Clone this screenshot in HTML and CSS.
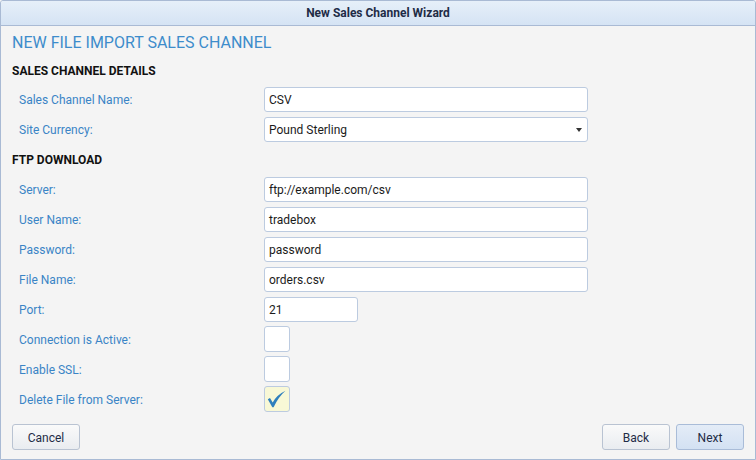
FILE: index.html
```html
<!DOCTYPE html>
<html>
<head>
<meta charset="utf-8">
<link rel="stylesheet" href="styles.css">
</head>
<body>
<div class="window">
  <div class="titlebar">New Sales Channel Wizard</div>
  <div class="content">
    <h1 class="heading">NEW FILE IMPORT SALES CHANNEL</h1>
    <div class="section first">SALES CHANNEL DETAILS</div>
    <div class="row"><span class="label">Sales Channel Name:</span><div class="input wide">CSV</div></div>
    <div class="row"><span class="label">Site Currency:</span><div class="input wide select">Pound Sterling<span class="caret"></span></div></div>
    <div class="section">FTP DOWNLOAD</div>
    <div class="row"><span class="label">Server:</span><div class="input wide">ftp://example.com/csv</div></div>
    <div class="row"><span class="label">User Name:</span><div class="input wide">tradebox</div></div>
    <div class="row"><span class="label">Password:</span><div class="input wide">password</div></div>
    <div class="row"><span class="label">File Name:</span><div class="input wide">orders.csv</div></div>
    <div class="row"><span class="label">Port:</span><div class="input short">21</div></div>
    <div class="row"><span class="label">Connection is Active:</span><div class="check"></div></div>
    <div class="row"><span class="label">Enable SSL:</span><div class="check"></div></div>
    <div class="row"><span class="label">Delete File from Server:</span><div class="check checked"><svg width="24" height="24" viewBox="0 0 24 24"><path d="M2.8 12.2 L5 11 L7.7 15.4 Q12 7.8 20.5 3.8 Q13.5 9.8 8.6 20.3 L7.3 20.3 Z" fill="#2f7fbd"/></svg></div></div>
  </div>
  <div class="footer">
    <button class="btn">Cancel</button>
    <div class="right">
      <button class="btn">Back</button>
      <button class="btn primary">Next</button>
    </div>
  </div>
</div>
</body>
</html>
```
FILE: styles.css
```css
* { box-sizing: border-box; }
html, body { margin: 0; padding: 0; }
body { font-family: Roboto, "Liberation Sans", sans-serif; font-size: 12px; background: #f4f4f4; }
.window {
  width: 756px; height: 460px;
  border: 1px solid #a9bad4;
  border-radius: 3px 3px 0 0;
  background: #f4f4f4;
  display: flex; flex-direction: column;
}
.titlebar {
  height: 25px;
  border-bottom: 1px solid #a9bad4;
  background: linear-gradient(#e6eff9, #d5e3f4);
  border-radius: 2px 2px 0 0;
  text-align: center;
  font-weight: bold;
  font-size: 12px;
  line-height: 24px;
  color: #1f2c46;
}
.content { padding: 0 11px; flex: 1; }
.heading {
  margin: 7px 0 0;
  font-size: 16px;
  font-weight: normal;
  line-height: 20px;
  color: #3d8ccb;
}
.section {
  height: 30px;
  padding-top: 2px;
  line-height: 28px;
  font-weight: bold;
  color: #111;
}
.section.first { height: 31px; padding-top: 5px; line-height: 26px; }
.row { height: 30px; display: flex; align-items: center; }
.label { width: 252px; padding-left: 7px; padding-top: 2px; color: #3a84c6; }
.input {
  height: 25px;
  background: #fff;
  border: 1px solid #bccbe0;
  border-radius: 3px;
  padding: 1px 4px 0;
  line-height: 23px;
  color: #1b1b1b;
  position: relative;
}
.wide { width: 324px; }
.short { width: 94px; }
.caret {
  position: absolute; right: 5px; top: 10px;
  border-left: 3.5px solid transparent; border-right: 3.5px solid transparent;
  border-top: 4px solid #333;
}
.check {
  width: 26px; height: 26px;
  background: #fff;
  border: 1px solid #bccbe0;
  border-radius: 3px;
  display: flex; align-items: center; justify-content: center;
}
.check.checked { background: #f8f8d6; }
.footer {
  display: flex; justify-content: space-between;
  padding: 0 11px 9px 11px;
}
.right { display: flex; gap: 6px; }
.btn {
  width: 68px; height: 26px;
  font-family: Roboto, "Liberation Sans", sans-serif;
  font-size: 12px;
  color: #1f2c46;
  background: linear-gradient(#fafafa, #e9ecf0);
  border: 1px solid #b9c3d2;
  border-radius: 3px;
  padding: 1px 0 0;
}
.btn.primary { background: linear-gradient(#e4ecf7, #d3e1f3); border-color: #a9bcd8; }
```
